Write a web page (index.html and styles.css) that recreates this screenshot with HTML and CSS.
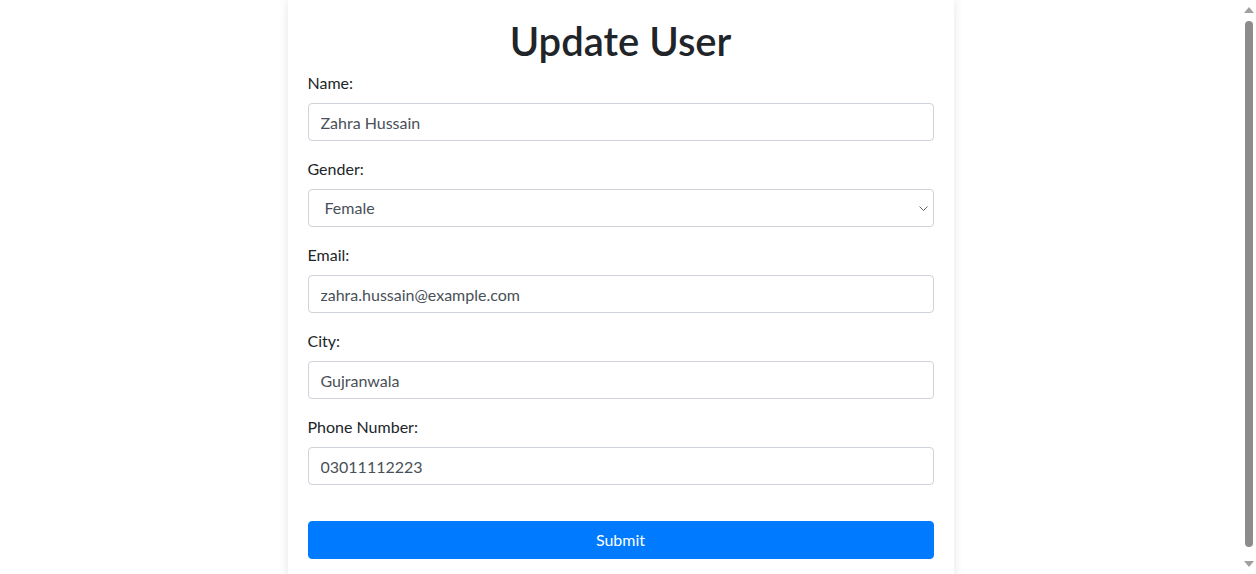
FILE: index.html
```html
<!DOCTYPE html>
<html lang="en">
<head>
<meta charset="utf-8">
<title>Update User</title>
<link rel="stylesheet" href="styles.css">
</head>
<body>
<div class="page">
  <div class="card">
    <h1 class="title">Update User</h1>
    <form class="form">
      <div class="group">
        <label class="label" for="name">Name:</label>
        <input class="control" id="name" type="text" value="Zahra Hussain">
      </div>
      <div class="group">
        <label class="label" for="gender">Gender:</label>
        <div class="select-wrap">
          <select class="control select" id="gender">
            <option>Male</option>
            <option selected>Female</option>
          </select>
          <svg class="chev" width="9" height="5" viewBox="0 0 9 5"><path d="M0.5 0.5l4 4 4-4" fill="none" stroke="#666" stroke-width="1"/></svg>
        </div>
      </div>
      <div class="group">
        <label class="label" for="email">Email:</label>
        <input class="control" id="email" type="email" value="zahra.hussain@example.com">
      </div>
      <div class="group">
        <label class="label" for="city">City:</label>
        <input class="control" id="city" type="text" value="Gujranwala">
      </div>
      <div class="group">
        <label class="label" for="phone">Phone Number:</label>
        <input class="control" id="phone" type="text" value="03011112223">
      </div>
      <button class="submit" type="button">Submit</button>
    </form>
  </div>
</div>
<div class="scrollbar" aria-hidden="true">
  <span class="arrow up"></span>
  <span class="thumb"></span>
  <span class="arrow down"></span>
</div>
</body>
</html>
```
FILE: styles.css
```css
html, body {
  margin: 0;
  padding: 0;
  background: #fff;
  overflow: hidden;
}
body {
  font-family: Lato, "Segoe UI", sans-serif;
  font-size: 16px;
  line-height: 1.5;
  color: #212529;
}
.page {
  width: calc(100% - 15px);
}
.card {
  width: 626px;
  margin: 0 auto;
  padding: 17px 20px 30px;
  background: #fff;
  box-shadow: 0 0 10px rgba(0,0,0,0.1);
}
.title {
  margin: 0 0 6px;
  font-size: 40px;
  line-height: 48px;
  font-weight: 600;
  text-align: center;
}
.form {
  display: flex;
  flex-direction: column;
}
.group {
  display: flex;
  flex-direction: column;
  margin-bottom: 16px;
}
.label {
  margin-bottom: 8px;
  line-height: 24px;
}
.control {
  box-sizing: border-box;
  width: 100%;
  height: 38px;
  padding: 6px 12px;
  font-family: inherit;
  font-size: 16px;
  line-height: 24px;
  color: #495057;
  background: #fff;
  border: 1px solid #ced4da;
  border-radius: 4px;
  outline: none;
}
.select-wrap {
  position: relative;
}
.select {
  appearance: none;
  -webkit-appearance: none;
  padding-left: 16px;
}
.chev {
  position: absolute;
  right: 6px;
  top: 17px;
}
.submit {
  margin-top: 20px;
  height: 38px;
  padding: 6px 12px;
  font-family: inherit;
  font-size: 16px;
  line-height: 24px;
  color: #fff;
  background: #007bff;
  border: 1px solid #007bff;
  border-radius: 4px;
}
.scrollbar {
  position: fixed;
  top: 0;
  right: 0;
  bottom: 0;
  width: 15px;
  background: #fff;
  display: flex;
  flex-direction: column;
  align-items: center;
  padding: 7px 0;
  box-sizing: border-box;
}
.arrow {
  width: 0;
  height: 0;
  border-left: 5px solid transparent;
  border-right: 5px solid transparent;
}
.arrow.up {
  border-bottom: 6px solid #a0a0a0;
}
.arrow.down {
  border-top: 6px solid #a0a0a0;
}
.thumb {
  flex: 1;
  width: 8px;
  margin: 8px 0 14px;
  background: #8c8c8c;
  border-radius: 4px;
}
```
